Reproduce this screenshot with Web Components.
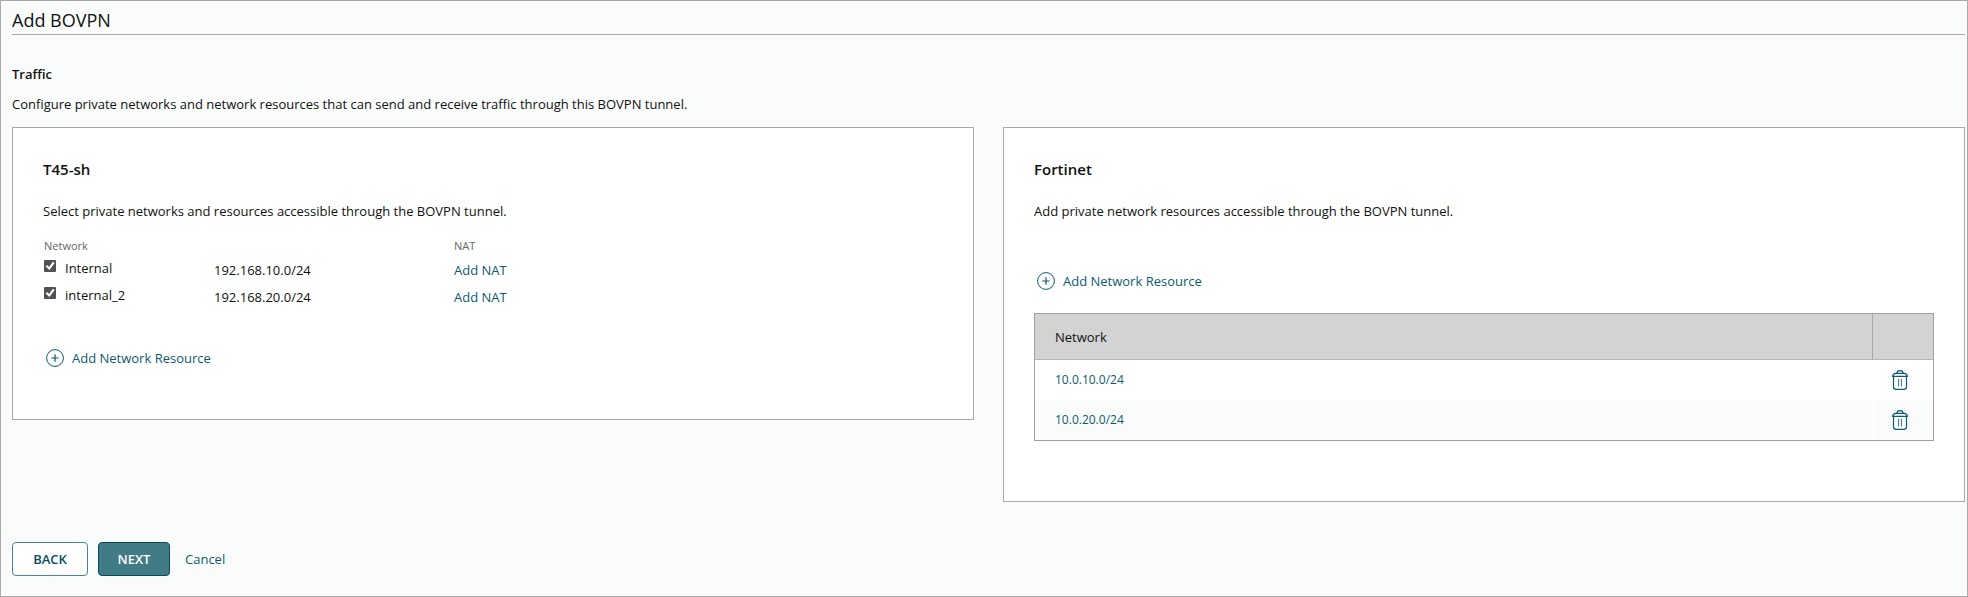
<!DOCTYPE html>
<html lang="en">
<head>
<meta charset="utf-8">
<title>Add BOVPN</title>
<style>
  html, body { margin: 0; }
  body {
    --line: #a9a9a9;
    --link: #0d5a70;
    --shade: #fafcfb;
    background: var(--shade);
    color: #111;
    font: 400 13px/20px "Open Sans", "Noto Sans", sans-serif;
  }
</style>
</head>
<body>
<bovpn-page heading="Add BOVPN">
  <traffic-section heading="Traffic" text="Configure private networks and network resources that can send and receive traffic through this BOVPN tunnel.">
    <endpoint-panel heading="T45-sh" text="Select private networks and resources accessible through the BOVPN tunnel.">
      <network-picker></network-picker>
      <add-resource style="margin-top:40px"></add-resource>
    </endpoint-panel>
    <endpoint-panel heading="Fortinet" text="Add private network resources accessible through the BOVPN tunnel.">
      <add-resource style="margin-top:50px"></add-resource>
      <resource-table></resource-table>
    </endpoint-panel>
  </traffic-section>
  <wizard-actions slot="actions"></wizard-actions>
</bovpn-page>

<script>
function define(name, html) {
  const template = document.createElement('template');
  template.innerHTML = html;
  customElements.define(name, class extends HTMLElement {
    constructor() {
      super();
      this.attachShadow({ mode: 'open' }).append(template.content.cloneNode(true));
    }
    connectedCallback() {
      for (const key of ['heading', 'text']) {
        const target = this.shadowRoot.querySelector(`[data-${key}]`);
        if (target) target.textContent = this.getAttribute(key);
      }
    }
  });
}

define('bovpn-page', `
<style>
  :host { display: flex; flex-direction: column; box-sizing: border-box; min-height: 100vh;
          border: 1px solid var(--line); padding: 7px 2px 20px 11px; }
  h1 { margin: 0; padding-bottom: 2px; border-bottom: 1px solid var(--line);
       font-size: 18px; line-height: 24px; font-weight: 400; }
</style>
<h1 data-heading></h1>
<slot></slot>
<slot name="actions"></slot>`);

define('traffic-section', `
<style>
  :host { display: block; margin-top: 29px; }
  h2 { margin: 0 0 10px; font-size: 13px; line-height: 20px; font-weight: 600; }
  p { margin: 0 0 13px; }
  div { display: grid; grid-template-columns: 1fr 1fr; column-gap: 29px; align-items: start; }
</style>
<h2 data-heading></h2>
<p data-text></p>
<div><slot></slot></div>`);

define('endpoint-panel', `
<style>
  :host { display: block; background: #fff; border: 1px solid var(--line); padding: 31px 30px 51px; }
  h3 { margin: 0 0 22px; font-size: 15px; line-height: 20px; font-weight: 600; }
  p { margin: 0; }
</style>
<h3 data-heading></h3>
<p data-text></p>
<slot></slot>`);

define('add-resource', `
<style>
  :host { display: flex; padding-left: 3px; }
  button { display: flex; align-items: center; gap: 8px; margin: 0; padding: 0; border: 0;
           background: none; color: var(--link); font: inherit; cursor: pointer; }
  svg { width: 18px; height: 18px; fill: none; stroke: currentColor; }
</style>
<button type="button">
  <svg viewBox="0 0 18 18" aria-hidden="true"><circle cx="9" cy="9" r="8.4"/><path d="M9 5.3v7.4M5.3 9h7.4" stroke-width="1.2"/></svg>
  Add Network Resource
</button>`);

const pickerRow = (id, name, address) => `
<tr>
  <td class="pick"><label for="${id}"><input type="checkbox" id="${id}" checked>${name}</label></td>
  <td>${address}</td>
  <td><a href="#nat">Add NAT</a></td>
</tr>`;

define('network-picker', `
<style>
  :host { display: block; margin: 17px 0 0 1px; }
  table { border-spacing: 0; }
  th, td { padding: 0; text-align: left; vertical-align: top; font-weight: 400; }
  th { font-size: 11px; line-height: 16px; color: #666; }
  th:nth-child(1) { width: 170px; }
  th:nth-child(2) { width: 240px; }
  td { padding: 6px 0 1px; }
  td.pick { padding: 4px 0 0; }
  label { display: flex; gap: 9px; }
  input { appearance: none; width: 12px; height: 12px; margin: 2px 0 0; border-radius: 1px; background: #505257; }
  input:checked::after { content: ""; display: block; width: 12px; height: 12px; background: #fff;
    clip-path: polygon(14% 54%, 26% 42%, 42% 58%, 74% 14%, 89% 25%, 45% 83%); }
  a { color: var(--link); text-decoration: none; }
</style>
<table>
  <thead><tr><th>Network</th><th></th><th>NAT</th></tr></thead>
  <tbody>${pickerRow('internal', 'Internal', '192.168.10.0/24')}${pickerRow('internal-2', 'internal_2', '192.168.20.0/24')}</tbody>
</table>`);

const resourceRow = address => `
<tr>
  <td><a href="#edit">${address}</a></td>
  <td class="tool"><button type="button" aria-label="Delete ${address}">
    <svg viewBox="0 0 16 20" aria-hidden="true">
      <path d="M4.8 3.2C5 1.5 6.3.6 8 .6s3 .9 3.2 2.6M.7 6.4C.9 4.4 2.3 3.3 4 3.3h8c1.7 0 3.1 1.1 3.3 3.1z"/>
      <path d="M1.5 6.5v10.2c0 1.6 1 2.7 2.6 2.7h7.8c1.6 0 2.6-1.1 2.6-2.7V6.5"/>
      <path d="M6.5 9v7.6M9.5 9v7.6" opacity=".75"/>
    </svg></button></td>
</tr>`;

define('resource-table', `
<style>
  :host { display: block; margin: 22px 0 9px; }
  table { width: 100%; table-layout: fixed; border: 1px solid #a0a0a0; border-spacing: 0; }
  th, td { box-sizing: border-box; padding: 0 0 0 20px; text-align: left; vertical-align: middle; font-weight: 400; }
  th { height: 46px; background: #d3d3d3; border-bottom: 1px solid #b5b5b5; }
  th:last-child { width: 61px; border-left: 1px solid #a9a9a9; }
  td { height: 40px; font-size: 12px; }
  tr:nth-child(even) td { background: var(--shade); }
  td.tool { padding: 0 6px 0 0; border-left: 1px solid #fff; }
  a { color: var(--link); text-decoration: none; }
  button { display: block; width: 16px; height: 20px; margin: 0 auto; padding: 0; border: 0;
           background: none; color: var(--link); cursor: pointer; }
  svg { display: block; width: 16px; height: 20px; fill: none; stroke: currentColor; stroke-width: 1.2; }
</style>
<table>
  <thead><tr><th>Network</th><th></th></tr></thead>
  <tbody>${resourceRow('10.0.10.0/24')}${resourceRow('10.0.20.0/24')}</tbody>
</table>`);

define('wizard-actions', `
<style>
  :host { display: flex; align-items: center; margin-top: 40px; }
  button { box-sizing: border-box; height: 34px; margin: 0 10px 0 0; padding: 0 18px; border: 1px solid #4b8494;
           border-radius: 4px; background: #fff; color: #084d62; font: inherit; font-weight: 600; }
  .back { min-width: 76px; }
  .next { min-width: 72px; margin-right: 15px; background: #407b86; border-color: #0a4a5c; color: #fff; }
  a { color: var(--link); text-decoration: none; }
</style>
<button type="button" class="back">BACK</button>
<button type="submit" class="next">NEXT</button>
<a href="#cancel">Cancel</a>`);
</script>
</body>
</html>
